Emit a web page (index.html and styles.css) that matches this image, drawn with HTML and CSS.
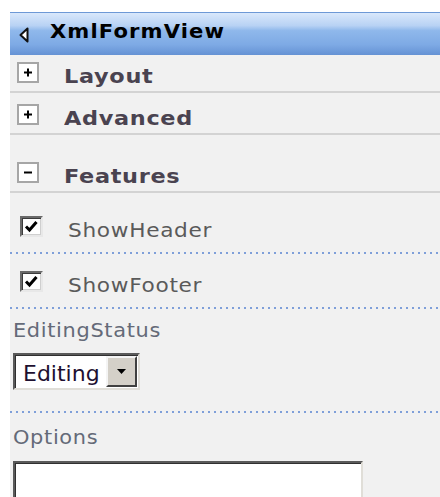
FILE: index.html
```html
<!DOCTYPE html>
<html lang="en">
<head>
<meta charset="utf-8">
<title>XmlFormView</title>
<link rel="stylesheet" href="styles.css">
</head>
<body>
<div class="toolpane">
  <div class="pane-header">
    <svg class="collapse-arrow" width="10" height="16" viewBox="0 0 10 16">
      <polygon points="8.5,1.5 1.5,8 8.5,14.5" fill="#fff" stroke="#111" stroke-width="2" stroke-linejoin="round"/>
    </svg>
    <span class="pane-title">XmlFormView</span>
  </div>

  <div class="section section-layout">
    <span class="toggle">
      <svg width="18" height="17" viewBox="0 0 18 17"><path d="M5 8.5h8M9 4.5v8" stroke="#000" stroke-width="2"/></svg>
    </span>
    <span class="section-title">Layout</span>
  </div>

  <div class="section section-advanced">
    <span class="toggle">
      <svg width="18" height="17" viewBox="0 0 18 17"><path d="M5 8.5h8M9 4.5v8" stroke="#000" stroke-width="2"/></svg>
    </span>
    <span class="section-title">Advanced</span>
  </div>

  <div class="section section-features">
    <span class="toggle">
      <svg width="18" height="17" viewBox="0 0 18 17"><path d="M5 8.5h8" stroke="#000" stroke-width="2"/></svg>
    </span>
    <span class="section-title">Features</span>
  </div>

  <div class="check-row first">
    <span class="checkbox">
      <svg width="17" height="15" viewBox="0 0 17 15"><path d="M3 7.5l3.5 3.5 7-8" fill="none" stroke="#000" stroke-width="3"/></svg>
    </span>
    <span class="field-label">ShowHeader</span>
  </div>

  <div class="check-row">
    <span class="checkbox">
      <svg width="17" height="15" viewBox="0 0 17 15"><path d="M3 7.5l3.5 3.5 7-8" fill="none" stroke="#000" stroke-width="3"/></svg>
    </span>
    <span class="field-label">ShowFooter</span>
  </div>

  <div class="prop">
    <div class="prop-label">EditingStatus</div>
    <div class="dropdown">
      <span class="dropdown-value">Editing</span>
      <span class="dropdown-btn">
        <svg width="9" height="5" viewBox="0 0 9 5"><polygon points="0,0 9,0 4.5,5" fill="#000"/></svg>
      </span>
    </div>
  </div>

  <div class="prop prop-options">
    <div class="prop-label">Options</div>
    <input class="text-input" type="text">
  </div>
</div>
</body>
</html>
```

FILE: styles.css
```css
html, body {
  margin: 0;
  padding: 0;
  background: #fff;
  overflow: hidden;
}

body {
  padding: 12px 0 0 10px;
  font-family: "DejaVu Sans", Verdana, sans-serif;
}

.toolpane {
  background: #f1f1f1;
  height: 485px;
  overflow: hidden;
}

/* the tool pane's text is set wide */
.pane-title,
.section-title,
.field-label,
.prop-label {
  display: inline-block;
  transform-origin: 0 0;
}

/* title bar */
.pane-header {
  height: 43px;
  box-sizing: border-box;
  border-top: 1px solid #6d99d6;
  background: linear-gradient(#d9e8fb 0%, #b8d2f4 30%, #8fb8eb 42%, #7eaae5 75%, #6592d4 100%);
  display: flex;
  align-items: flex-start;
  padding: 0 0 0 9px;
}

.collapse-arrow {
  margin-top: 14px;
}

.pane-title {
  margin-left: 21px;
  margin-top: 9px;
  font-size: 19px;
  line-height: 19px;
  font-weight: bold;
  letter-spacing: 1px;
  transform: scaleX(1.11);
  color: #000;
}

/* collapsible section rows */
.section {
  display: flex;
  align-items: flex-start;
  padding: 0 0 8px 7px;
  border-bottom: 2px solid #d3d3d3;
}

.section-layout { padding-top: 7px; }
.section-advanced { padding-top: 11px; }
.section-features { padding-top: 27px; }

.toggle {
  width: 22px;
  height: 21px;
  box-sizing: border-box;
  border: 2px solid #a6a6a6;
  background: #fff;
  display: flex;
  align-items: center;
  justify-content: center;
  flex: none;
}

.section-title {
  margin: 4px 0 -3px 25px;
  font-size: 20px;
  line-height: 20px;
  font-weight: bold;
  letter-spacing: 0.6px;
  transform: scaleX(1.12);
  color: #4a4350;
}

/* checkbox rows with dotted separators */
.check-row {
  display: flex;
  align-items: flex-start;
  padding: 17px 0 15px 10px;
  border-bottom: 2px dotted #7f9fd9;
  border-image: repeating-linear-gradient(to right, #7f9fd9 0 2px, transparent 2px 6px) 0 0 2 0 / 0 0 2px 0 repeat;
}

.check-row.first { padding-top: 23px; }

.checkbox {
  width: 23px;
  height: 21px;
  box-sizing: border-box;
  border: 2px solid;
  border-color: #6a6a6a #e8e8e8 #e8e8e8 #6a6a6a;
  box-shadow: inset 1px 1px 0 #3c3c3c, inset -1px -1px 0 #cfcfcf;
  background: #fff;
  display: flex;
  align-items: center;
  justify-content: center;
  flex: none;
}

.field-label {
  margin: 5px 0 -3px 25px;
  font-size: 19px;
  line-height: 19px;
  letter-spacing: 0.6px;
  transform: scaleX(1.14);
  color: #5a5a5a;
}

/* labelled properties */
.prop {
  padding: 12px 0 21px 3px;
  border-bottom: 2px dotted #7f9fd9;
  border-image: repeating-linear-gradient(to right, #7f9fd9 0 2px, transparent 2px 6px) 0 0 2 0 / 0 0 2px 0 repeat;
}

.prop-options {
  padding-top: 15px;
  border-bottom: none;
  border-image: none;
}

.prop-label {
  display: block;
  width: max-content;
  font-size: 19px;
  line-height: 19px;
  letter-spacing: 0.6px;
  transform: scaleX(1.1);
  color: #646a78;
}

.dropdown {
  margin-top: 13px;
  width: 127px;
  height: 37px;
  box-sizing: border-box;
  border: 2px solid;
  border-color: #5a5a5a #e0ded8 #e0ded8 #5a5a5a;
  box-shadow: inset 1px 1px 0 #303030;
  background: #fff;
  display: flex;
  align-items: flex-start;
  justify-content: space-between;
}

.dropdown-value {
  margin: 8px 0 0 8px;
  font-size: 22px;
  line-height: 22px;
  color: #1e1030;
}

.dropdown-btn {
  width: 31px;
  height: 31px;
  margin: 1px 1px 0 0;
  box-sizing: border-box;
  background: #d4d0c8;
  border: 2px solid;
  border-color: #f4f4f4 #404040 #404040 #f4f4f4;
  display: flex;
  align-items: center;
  justify-content: center;
}

.text-input {
  display: block;
  margin: 14px 0 0 0;
  width: 350px;
  height: 40px;
  box-sizing: border-box;
  border: 2px solid;
  border-color: #5a5a5a #e0ded8 #e0ded8 #5a5a5a;
  box-shadow: inset 1px 1px 0 #303030;
  background: #fff;
  padding: 0 6px;
  font: 19px "DejaVu Sans", sans-serif;
  outline: none;
}
```
